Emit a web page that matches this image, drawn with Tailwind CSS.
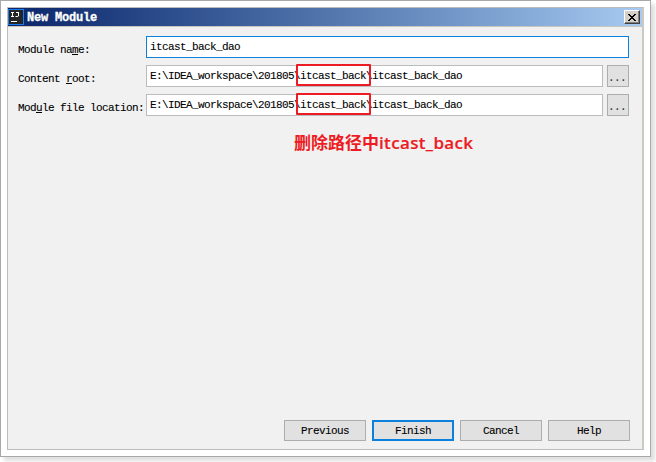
<!DOCTYPE html>
<html lang="zh-CN">
<head>
<meta charset="utf-8">
<title>New Module</title>
<script src="https://cdn.jsdelivr.net/npm/@tailwindcss/browser@4"></script>
</head>
<body class="w-[656px] h-[462px] overflow-hidden bg-white font-['Liberation_Mono','Noto_Sans_CJK_SC',monospace] text-[11px] leading-[14px] tracking-[-0.6px] text-black [-webkit-text-stroke:0.1px_currentColor]">
<div class="w-[651px] h-[457px] border border-[#a9a9a9] bg-white p-1.5 shadow-[4px_4px_4px_rgba(0,0,0,0.13)]">
  <main class="relative flex h-[443px] w-[637px] flex-col border border-[#bcbcbc] border-r-2 border-r-[#cbc9c2] bg-[#f1f1f1]">
    <header class="flex h-[19px] shrink-0 items-center border-b border-[#c8c5c0] bg-linear-to-r from-[#0a246a] to-[#a6caf0] pr-[2px]">
      <svg class="h-4 w-4 shrink-0" viewBox="0 0 16 16" fill="none">
        <rect x=".5" y=".5" width="15" height="15" fill="#252525" stroke="#1b7cf0"/>
        <path d="M3 3.5h3M4.5 3.5v4M3 7.5h3M8 3.5h3M10.5 3.5v3.5l-.7.5H7.5M3 12.5h6" stroke="#fff"/>
      </svg>
      <h1 class="ml-[3px] mt-px grow font-bold text-[12px] tracking-[-0.2px] text-white [-webkit-text-stroke:0.3px_white]">New Module</h1>
      <button class="flex h-[14px] w-4 items-center justify-center border border-white border-r-[#404040] border-b-[#404040] bg-[#d4d0c8] shadow-[inset_-1px_-1px_#808080]">
        <svg class="h-[7px] w-2" viewBox="0 0 8 7" fill="#000" shape-rendering="crispEdges"><path d="M0 0h2v1H0zM6 0h2v1H6zM1 1h2v1H1zM5 1h2v1H5zM2 2h4v1H2zM3 3h2v1H3zM2 4h4v1H2zM1 5h2v1H1zM5 5h2v1H5zM0 6h2v1H0zM6 6h2v1H6z"/></svg>
      </button>
    </header>
    <section class="flex flex-col gap-[7px] pl-[10px] pt-[9px]">
      <div class="flex h-[22px]">
        <label class="w-[128px] shrink-0 whitespace-pre pt-[7px]">Module na<u>m</u>e:</label>
        <div class="w-[483px] border border-[#0b80dc] bg-white pl-[3px] pt-[3px]">itcast_back_dao</div>
      </div>
      <div class="flex h-[22px]">
        <label class="w-[128px] shrink-0 whitespace-pre pt-[7px]">Content <u>r</u>oot:</label>
        <div class="relative w-[457px] border border-[#bcbcbc] bg-white pl-[3px] pt-[3px]">E:\IDEA_workspace\201805\itcast_back\itcast_back_dao
          <span class="absolute left-[149px] top-[-2px] h-[22px] w-[75px] rounded-[1px] border-2 border-[#ed1c24]"></span>
        </div>
        <button class="ml-1 w-[22px] border border-[#adadad] bg-[#e1e1e1] pt-1 pr-0.5 text-[#333]">...</button>
      </div>
      <div class="flex h-[22px]">
        <label class="w-[128px] shrink-0 whitespace-pre pt-[7px]">Mod<u>u</u>le file location:</label>
        <div class="relative w-[457px] border border-[#bcbcbc] bg-white pl-[3px] pt-[3px]">E:\IDEA_workspace\201805\itcast_back\itcast_back_dao
          <span class="absolute left-[149px] top-[-2px] h-[22px] w-[75px] rounded-[1px] border-2 border-[#ed1c24]"></span>
        </div>
        <button class="ml-1 w-[22px] border border-[#adadad] bg-[#e1e1e1] pt-1 pr-0.5 text-[#333]">...</button>
      </div>
    </section>
    <p class="ml-[286px] mt-[14px] flex items-baseline text-[17px] leading-6 font-bold tracking-normal text-[#ed1c24] [-webkit-text-stroke:0]"><span class="font-['Noto_Sans_CJK_SC',sans-serif]">删除路径中</span><span class="font-['Open_Sans',sans-serif] font-semibold tracking-[0.35px] [-webkit-text-stroke:0.2px_currentColor]">itcast_back</span></p>
    <footer class="mt-auto mb-2 flex justify-end gap-1.5 pr-3">
      <button class="h-[21px] w-[82px] border border-[#adadad] bg-[#e1e1e1]">Previous</button>
      <button class="h-[21px] w-[82px] border-2 border-[#0b80dc] bg-[#e1e1e1]">Finish</button>
      <button class="h-[21px] w-[82px] border border-[#adadad] bg-[#e1e1e1]">Cancel</button>
      <button class="h-[21px] w-[82px] border border-[#adadad] bg-[#e1e1e1]">Help</button>
    </footer>
  </main>
</div>
</body>
</html>
